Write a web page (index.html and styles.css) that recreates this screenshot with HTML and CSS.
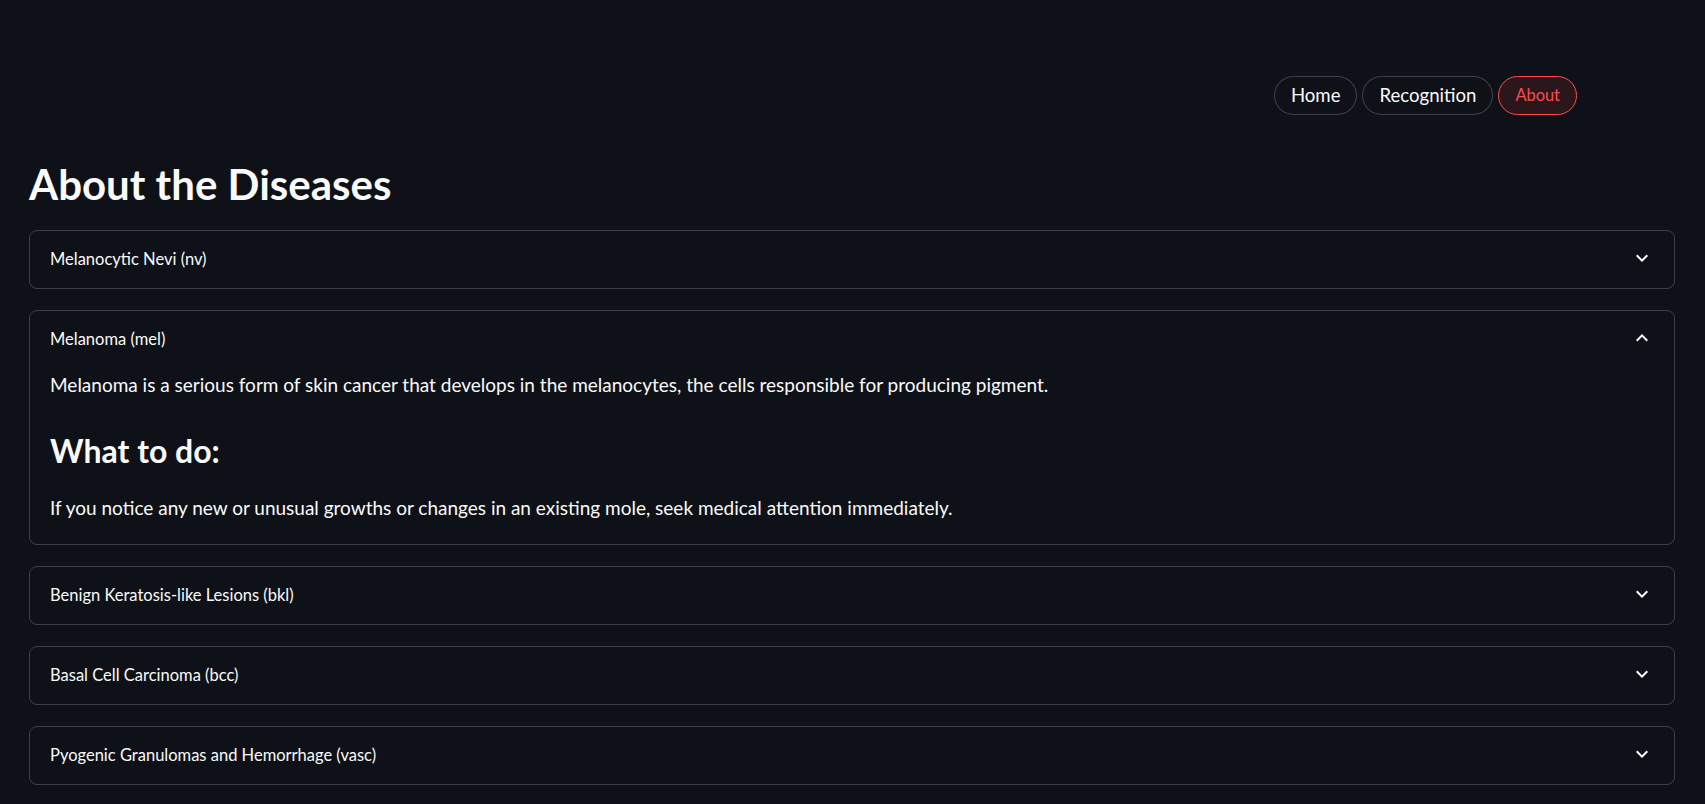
FILE: index.html
```html
<!DOCTYPE html>
<html lang="en">
<head>
<meta charset="utf-8">
<title>About the Diseases</title>
<link rel="stylesheet" href="styles.css">
</head>
<body>
<nav class="nav">
  <button class="pill">Home</button>
  <button class="pill">Recognition</button>
  <button class="pill pill-active">About</button>
</nav>
<main class="main">
  <h1 class="title">About the Diseases</h1>
  <div class="list">
    <section class="exp">
      <div class="exp-head">
        <span class="exp-label">Melanocytic Nevi (nv)</span>
        <svg class="chev" viewBox="0 0 24 24" width="24" height="24"><path d="M16.59 8.59L12 13.17 7.41 8.59 6 10l6 6 6-6z"/></svg>
      </div>
    </section>
    <section class="exp exp-open">
      <div class="exp-head">
        <span class="exp-label">Melanoma (mel)</span>
        <svg class="chev" viewBox="0 0 24 24" width="24" height="24"><path d="M12 8l-6 6 1.41 1.41L12 10.83l4.59 4.58L18 14z"/></svg>
      </div>
      <div class="exp-body">
        <p class="txt">Melanoma is a serious form of skin cancer that develops in the melanocytes, the cells responsible for producing pigment.</p>
        <h3 class="sub">What to do:</h3>
        <p class="txt">If you notice any new or unusual growths or changes in an existing mole, seek medical attention immediately.</p>
      </div>
    </section>
    <section class="exp">
      <div class="exp-head">
        <span class="exp-label">Benign Keratosis-like Lesions (bkl)</span>
        <svg class="chev" viewBox="0 0 24 24" width="24" height="24"><path d="M16.59 8.59L12 13.17 7.41 8.59 6 10l6 6 6-6z"/></svg>
      </div>
    </section>
    <section class="exp">
      <div class="exp-head">
        <span class="exp-label">Basal Cell Carcinoma (bcc)</span>
        <svg class="chev" viewBox="0 0 24 24" width="24" height="24"><path d="M16.59 8.59L12 13.17 7.41 8.59 6 10l6 6 6-6z"/></svg>
      </div>
    </section>
    <section class="exp">
      <div class="exp-head">
        <span class="exp-label">Pyogenic Granulomas and Hemorrhage (vasc)</span>
        <svg class="chev" viewBox="0 0 24 24" width="24" height="24"><path d="M16.59 8.59L12 13.17 7.41 8.59 6 10l6 6 6-6z"/></svg>
      </div>
    </section>
  </div>
</main>
</body>
</html>
```

FILE: styles.css
```css
* { box-sizing: border-box; }
html, body {
  margin: 0;
  padding: 0;
  background: #0e1117;
  color: #fafafa;
  font-family: "Lato", "Liberation Sans", sans-serif;
}
body { height: 804px; overflow: hidden; }

.nav {
  display: flex;
  justify-content: flex-end;
  gap: 5px;
  padding: 76px 128px 0 0;
}
.pill {
  height: 39px;
  padding: 0 16px;
  border-radius: 20px;
  border: 1px solid rgba(250, 250, 250, 0.2);
  background: #0e1117;
  color: #fafafa;
  font-family: inherit;
  font-size: 18.6px;
  line-height: 1;
}
.pill-active {
  color: #ff4b4b;
  border-color: #ff4b4b;
  background: #2a161b;
  font-size: 16.4px;
}

.main {
  padding: 0 30px 0 29px;
}
.title {
  margin: 44px 0 0;
  font-size: 42px;
  font-weight: 700;
  line-height: 50px;
}
.list {
  display: flex;
  flex-direction: column;
  gap: 21px;
  margin-top: 21px;
}
.exp {
  border: 1px solid rgba(250, 250, 250, 0.2);
  border-radius: 8px;
}
.exp-head {
  height: 57px;
  display: flex;
  align-items: center;
  justify-content: space-between;
  padding: 0 20px;
}
.exp-label {
  font-size: 16.5px;
  line-height: 1.2;
}
.chev {
  fill: #fafafa;
  display: block;
  align-self: flex-start;
  margin-top: 15px;
}

.exp-body {
  padding: 3px 20px 22px;
}
.txt {
  margin: 0;
  font-size: 19px;
  line-height: 28px;
}
.sub {
  margin: 32px 0 23px;
  font-size: 32px;
  font-weight: 700;
  line-height: 40px;
}
```
